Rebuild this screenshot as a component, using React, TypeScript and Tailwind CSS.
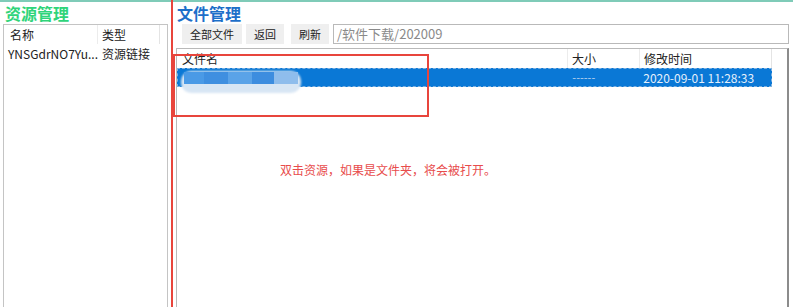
import React from "react";

const font = { fontFamily: '"Microsoft YaHei", "Noto Sans CJK SC", "Noto Sans", sans-serif' };

export default function App() {
  return (
    <div className="relative w-[793px] h-[307px] overflow-hidden bg-white text-[12px] text-[#222]" style={font}>
      <div className="h-[2px] bg-[#7fcbb8]" />
      <div className="flex h-[305px]">
        {/* Left panel */}
        <div className="w-[176px] flex flex-col pl-[3px] pr-[8px]">
          <div className="h-[22px] pl-[2px] pt-[1px] text-[16px] font-bold leading-[20px] text-[#2fd47a]">资源管理</div>
          <div className="flex-1 border border-[#c4c4c4] border-b-0 bg-white">
            <div className="flex h-[19px] items-center leading-[19px]">
              <div className="w-[94px] pl-[6px] border-r border-[#ececec]">名称</div>
              <div className="w-[62px] pl-[4px] border-r border-[#e4e4e4]">类型</div>
            </div>
            <div className="flex h-[19px] items-center leading-[19px]">
              <div className="w-[94px] pl-[4px] whitespace-nowrap">YNSGdrNO7Yu...</div>
              <div className="w-[62px] pl-[4px]">资源链接</div>
            </div>
          </div>
        </div>

        {/* Right panel */}
        <div className="flex-1 flex flex-col pr-[4px]">
          <div className="h-[22px] pl-[1px] pt-[1px] text-[16px] font-bold leading-[20px] text-[#1d6fc9]">文件管理</div>
          <div className="flex h-[20px] items-stretch">
            <div className="ml-[6px] w-[60px] flex items-center justify-center bg-[#efefef] text-[11px]">全部文件</div>
            <div className="ml-[4px] w-[38px] flex items-center justify-center bg-[#efefef] text-[11px]">返回</div>
            <div className="ml-[7px] w-[38px] flex items-center justify-center bg-[#efefef] text-[11px]">刷新</div>
            <div className="ml-[4px] flex-1 flex items-center border border-[#b9b9b9] pl-[3px] text-[13px] text-[#8a8a8a]">/软件下载/202009</div>
          </div>
          <div className="mt-[4px] flex-1 border border-[#b9b9b9] border-r-2 border-r-[#8c8c8c] border-b-0 bg-white">
            <div className="flex h-[19px] items-center leading-[19px]">
              <div className="w-[391px] pl-[5px] border-r border-[#ececec]">文件名</div>
              <div className="w-[72px] pl-[4px] border-r border-[#ececec]">大小</div>
              <div className="w-[132px] pl-[4px] border-r border-[#e4e4e4]">修改时间</div>
            </div>
            <div className="relative flex h-[19px] w-[595px] items-center leading-[19px] bg-[#0a78d6] text-white border border-dashed border-[#7fb2e0]">
              <div className="w-[390px] relative h-full">
                <div className="absolute left-[3px] top-[2px] h-[22px] w-[120px] rounded-[10px] bg-[#d8e6f4] blur-[1px]" />
                <div className="absolute left-[6px] top-[3px] flex h-[12px]">
                  <div className="w-[20px] bg-[#4a9ae6]" />
                  <div className="w-[24px] bg-[#3f8fe0]" />
                  <div className="w-[24px] bg-[#5aa3e8]" />
                  <div className="w-[22px] bg-[#3d8ddf]" />
                  <div className="w-[24px] bg-[#8fbdec]" />
                </div>
              </div>
              <div className="w-[72px] pl-[5px] text-[11px] text-[#bcd6f0]">------</div>
              <div className="w-[132px] pl-[4px] text-[#e6f0fb]">2020-09-01 11:28:33</div>
            </div>
            <div className="mt-[74px] pl-[103px] text-[12px] text-[#e84c4c]">双击资源，如果是文件夹，将会被打开。</div>
          </div>
        </div>
      </div>

      {/* Annotations */}
      <div className="absolute left-[171px] top-0 h-[307px] w-[2px] bg-[#e8453c]" />
      <div className="absolute left-[173px] top-[54px] h-[63px] w-[256px] border-2 border-[#e8453c]" />
    </div>
  );
}
